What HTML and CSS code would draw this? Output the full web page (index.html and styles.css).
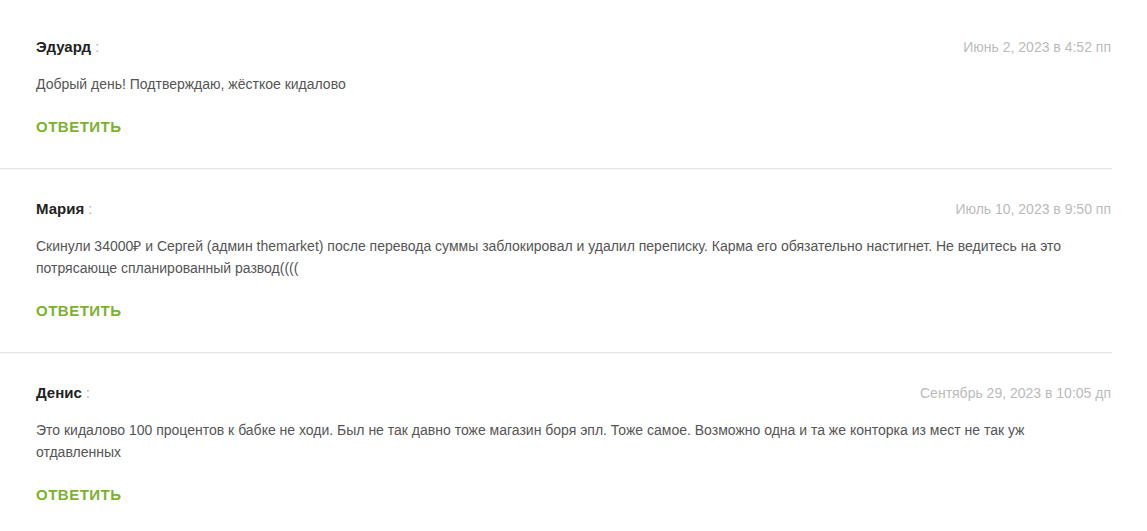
FILE: index.html
```html
<!DOCTYPE html>
<html lang="ru">
  <head>
    <meta charset="UTF-8" />
    <meta name="viewport" content="width=device-width, initial-scale=1.0" />
    <title>Отзывы</title>
    <link rel="stylesheet" href="styles.css">
  </head>
  <body>
    <ol class="comment-list">
      <li class="comment">
        <div class="comment-meta">
          <span class="comment-author"><b>Эдуард</b> <span class="says">:</span></span>
          <span class="comment-date">Июнь 2, 2023 в 4:52 пп</span>
        </div>
        <div class="comment-content">
          <p>Добрый день! Подтверждаю, жёсткое кидалово</p>
        </div>
        <a href="#" class="reply-link">Ответить</a>
      </li>
      <li class="comment">
        <div class="comment-meta">
          <span class="comment-author"><b>Мария</b> <span class="says">:</span></span>
          <span class="comment-date">Июль 10, 2023 в 9:50 пп</span>
        </div>
        <div class="comment-content">
          <p>Скинули 34000₽ и Сергей (админ themarket) после перевода суммы заблокировал и удалил переписку. Карма его обязательно настигнет. Не ведитесь на это потрясающе спланированный развод((((</p>
        </div>
        <a href="#" class="reply-link">Ответить</a>
      </li>
      <li class="comment">
        <div class="comment-meta">
          <span class="comment-author"><b>Денис</b> <span class="says">:</span></span>
          <span class="comment-date">Сентябрь 29, 2023 в 10:05 дп</span>
        </div>
        <div class="comment-content">
          <p>Это кидалово 100 процентов к бабке не ходи. Был не так давно тоже магазин боря эпл. Тоже самое. Возможно одна и та же конторка из мест не так уж отдавленных</p>
        </div>
        <a href="#" class="reply-link">Ответить</a>
      </li>
    </ol>
  </body>
</html>
```

FILE: styles.css
```css
body {
  margin: 0;
  padding: 0;
  background-color: #fff;
  font-family: "Liberation Sans", Arial, sans-serif;
}

.comment-list {
  list-style: none;
  margin: 0;
  padding: 7px 0 0 0;
  width: 1112px;
}

.comment {
  padding: 30px 1px 31px 36px;
  border-bottom: 1px solid #e6e6e6;
  box-shadow: 0 1px 0 #f6f6f6;
}

.comment-meta {
  display: flex;
  justify-content: space-between;
  align-items: baseline;
  line-height: 20px;
}

.comment-author {
  font-size: 15px;
  color: #222;
}

.comment-author b {
  font-weight: bold;
}

.says {
  color: #aaa;
  font-size: 14px;
}

.comment-date {
  font-size: 14px;
  color: #bbb;
}

.comment-content {
  margin-top: 16px;
}

.comment-content p {
  margin: 0;
  font-size: 14px;
  line-height: 22px;
  color: #555;
}

.reply-link {
  display: block;
  margin-top: 22px;
  font-size: 15px;
  line-height: 20px;
  font-weight: bold;
  letter-spacing: 0.5px;
  text-transform: uppercase;
  text-decoration: none;
  color: #7ab32e;
}
```
